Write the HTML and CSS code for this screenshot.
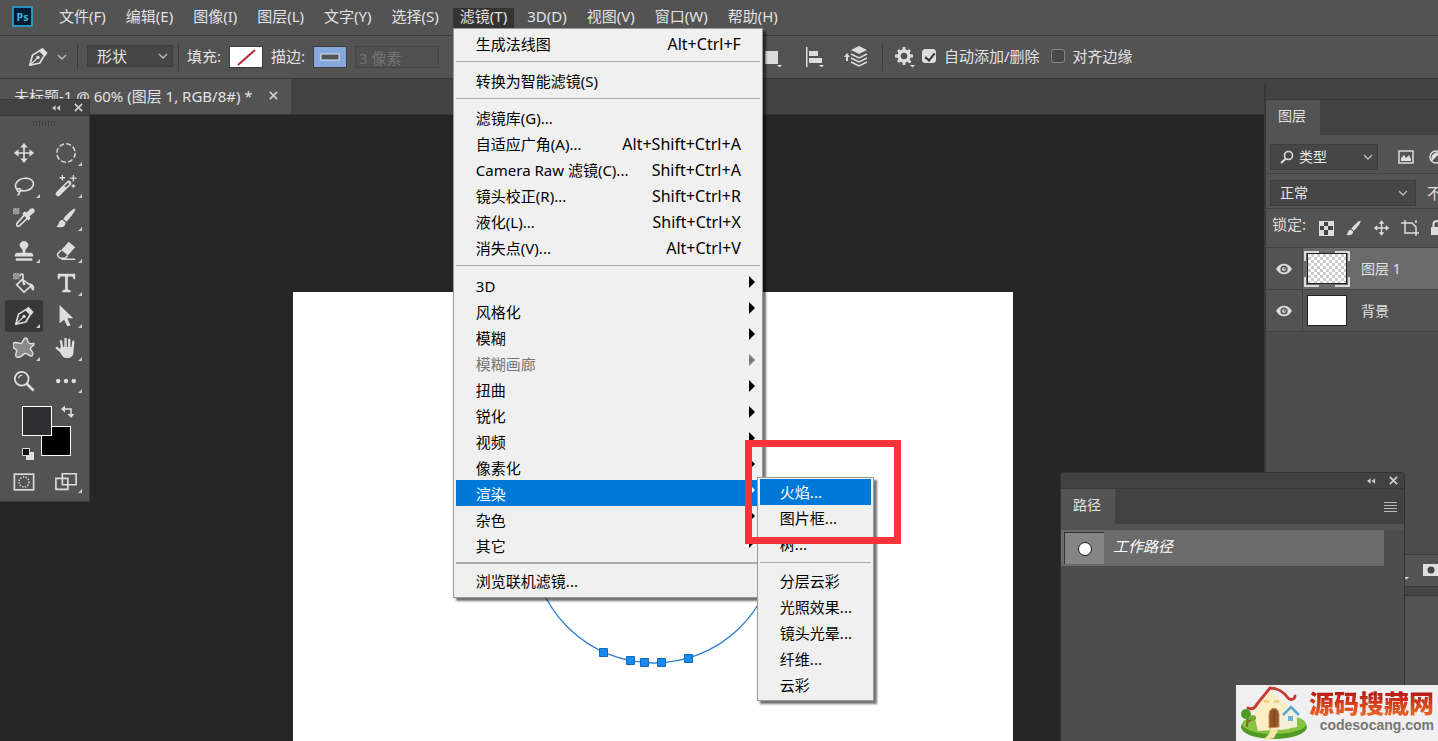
FILE: index.html
```html
<!DOCTYPE html>
<html lang="zh-CN">
<head>
<meta charset="utf-8">
<title>未标题-1 @ 60%</title>
<link rel="stylesheet" href="styles.css">
</head>
<body>
<svg class="defs" aria-hidden="true">
  <defs>
    <symbol id="pen" viewBox="0 0 24 24"><path d="M3 21l3-11 8-5 5 5-5 8.500-11 2.500z" fill="none" stroke="currentColor" stroke-width="1.800" stroke-linejoin="round"/><path d="M3.500 20.500l7.500-7" stroke="currentColor" stroke-width="1.300"/><circle cx="12" cy="12.500" r="1.800" fill="currentColor"/><path d="M13 5l4-3 5.500 5.500-3 4z" fill="currentColor"/></symbol>
    <symbol id="brush" viewBox="0 0 24 24"><path d="M22 2c1.500 1-6 11-9.500 14l-3.500-3C12 9 20 1 22 2zM8 14l3.500 3c0 6-6 5.500-10 4.500C5 20 3 15 8 14z" fill="currentColor"/></symbol>
    <symbol id="move" viewBox="0 0 24 24"><path d="M12 4v16M4 12h16" stroke="currentColor" stroke-width="1.800"/><path d="M12 1l4 5H8zM12 23l4-5H8zM1 12l5-4v8zM23 12l-5-4v8z" fill="currentColor"/></symbol>
    <symbol id="chevron" viewBox="0 0 10 6"><path d="M1 1l4 4 4-4" fill="none" stroke="#bbb" stroke-width="1.400"/></symbol>
    <symbol id="close" viewBox="0 0 10 10"><path d="M1 1l8 8M9 1l-8 8" stroke="currentColor" stroke-width="2"/></symbol>
    <symbol id="collapse" viewBox="0 0 10 6"><path d="M4 0v6L0 3zM9 0v6L5 3z" fill="currentColor"/></symbol>
    <symbol id="eye" viewBox="0 0 16 12"><path d="M0 6c4-7 12-7 16 0-4 7-12 7-16 0z" fill="currentColor"/><circle cx="8" cy="6" r="3.600" fill="#535353"/><circle cx="8" cy="6" r="2" fill="currentColor"/><circle cx="8.500" cy="5.500" r="1" fill="#535353"/></symbol>
    <pattern id="dots" width="3" height="3" patternUnits="userSpaceOnUse"><rect width="1.500" height="1.500" fill="#ddd"/><rect x="1.500" y="1.500" width="1.500" height="1.500" fill="#ddd"/></pattern>
  </defs>
</svg>
<div class="app">
  <header class="menubar">
    <svg class="logo" viewBox="0 0 20 20" role="img" aria-label="Ps"><rect x="1" y="1" width="18" height="18" fill="#001d33" stroke="#29a9e1" stroke-width="1.500"/><text x="10" y="14" text-anchor="middle">Ps</text></svg>
    <nav class="menus">
      <button class="menu-title">文件(F)</button>
      <button class="menu-title">编辑(E)</button>
      <button class="menu-title">图像(I)</button>
      <button class="menu-title">图层(L)</button>
      <button class="menu-title">文字(Y)</button>
      <button class="menu-title">选择(S)</button>
      <div class="menu-open">
        <button class="menu-title active">滤镜(T)</button>
        <ul class="menu filter-menu">
          <li><button class="item">生成法线图<kbd>Alt+Ctrl+F</kbd></button></li>
          <li class="rule"></li>
          <li><button class="item">转换为智能滤镜(S)</button></li>
          <li class="rule"></li>
          <li><button class="item">滤镜库(G)...</button></li>
          <li><button class="item">自适应广角(A)...<kbd>Alt+Shift+Ctrl+A</kbd></button></li>
          <li><button class="item">Camera Raw 滤镜(C)...<kbd>Shift+Ctrl+A</kbd></button></li>
          <li><button class="item">镜头校正(R)...<kbd>Shift+Ctrl+R</kbd></button></li>
          <li><button class="item">液化(L)...<kbd>Shift+Ctrl+X</kbd></button></li>
          <li><button class="item">消失点(V)...<kbd>Alt+Ctrl+V</kbd></button></li>
          <li class="rule"></li>
          <li><button class="item sub">3D</button></li>
          <li><button class="item sub">风格化</button></li>
          <li><button class="item sub">模糊</button></li>
          <li><button class="item sub" disabled>模糊画廊</button></li>
          <li><button class="item sub">扭曲</button></li>
          <li><button class="item sub">锐化</button></li>
          <li><button class="item sub">视频</button></li>
          <li><button class="item sub">像素化</button></li>
          <li class="submenu-host"><button class="item sub selected">渲染</button>
            <ul class="menu render-menu">
              <li><button class="item selected">火焰...</button></li>
              <li><button class="item">图片框...</button></li>
              <li><button class="item">树...</button></li>
              <li class="rule"></li>
              <li><button class="item">分层云彩</button></li>
              <li><button class="item">光照效果...</button></li>
              <li><button class="item">镜头光晕...</button></li>
              <li><button class="item">纤维...</button></li>
              <li><button class="item">云彩</button></li>
            </ul>
            <div class="highlight-frame"></div>
          </li>
          <li><button class="item sub">杂色</button></li>
          <li><button class="item sub">其它</button></li>
          <li class="rule thick"></li>
          <li><button class="item">浏览联机滤镜...</button></li>
        </ul>
      </div>
      <button class="menu-title">3D(D)</button>
      <button class="menu-title">视图(V)</button>
      <button class="menu-title">窗口(W)</button>
      <button class="menu-title">帮助(H)</button>
    </nav>
  </header>

  <section class="options">
    <div class="shape-options">
      <button class="tool-preset" aria-label="钢笔工具"><svg width="22" height="22"><use href="#pen"/></svg><svg width="10" height="6"><use href="#chevron"/></svg></button>
      <div class="select-wrap mode"><select aria-label="模式"><option>形状</option></select><svg width="10" height="6"><use href="#chevron"/></svg></div>
      <span class="divider"></span>
      <label class="swatch-label" for="fill">填充:</label>
      <button class="swatch" id="fill"><svg viewBox="0 0 32 20"><rect width="32" height="20" fill="#fff"/><path d="M8 18L25 3" stroke="#b32a35" stroke-width="2"/></svg></button>
      <label class="swatch-label" for="stroke">描边:</label>
      <button class="swatch" id="stroke"><svg viewBox="0 0 32 20"><rect width="32" height="20" fill="#87a8dc"/><rect x="7" y="7" width="18" height="6" fill="#535353" stroke="#dce6f5"/></svg></button>
      <input class="stroke-width" aria-label="描边宽度" value="3 像素" disabled>
    </div>
    <button class="icon-btn" aria-label="路径操作"><svg width="20" height="20" viewBox="0 0 20 20" fill="#ddd"><path d="M2 4h13v13H2zM14 18h5l-2.500 2.500z"/></svg></button>
    <button class="icon-btn align" aria-label="路径对齐"><svg width="20" height="20" viewBox="0 0 20 20" fill="#ddd"><path d="M1 0h1.500v20H1zM4 4h9v5H4zM4 11h13v5H4zM14 18h5l-2.500 2.500z"/></svg></button>
    <button class="icon-btn arrange" aria-label="路径排列"><svg width="26" height="22" viewBox="0 0 26 22" fill="#ddd"><path d="M4 7l3 4H5v4H3v-4H1zM16 0l8 4-8 4-8-4z"/><path d="M8 8l8 4 8-4M8 12l8 4 8-4M8 16l8 4 8-4" fill="none" stroke="#ddd" stroke-width="1.500"/></svg></button>
    <span class="divider"></span>
    <button class="icon-btn gear" aria-label="设置"><svg width="22" height="22" viewBox="0 0 22 22"><circle cx="10" cy="10" r="5" fill="none" stroke="#ddd" stroke-width="3.500"/><path d="M10 1v4M10 15v4M1 10h4M15 10h4M4 4l2.500 2.500M14 14l2.500 2.500M16 4l-2.500 2.500M6.500 13.500L4 16" stroke="#ddd" stroke-width="2.800"/><path d="M16 19h5l-2.500 2.500z" fill="#ddd"/></svg></button>
    <label class="check"><input type="checkbox" checked>自动添加/删除</label>
    <label class="check"><input type="checkbox">对齐边缘</label>
  </section>

  <div class="tabs">
    <div class="doc-tab"><span>未标题-1 @ 60% (图层 1, RGB/8#) *</span><button class="bare" aria-label="关闭"><svg width="9" height="9"><use href="#close"/></svg></button></div>
  </div>

  <main class="workspace">
    <div class="sheet">
      <svg viewBox="293 292 720 449" width="720" height="449">
        <circle cx="654" cy="541" r="122" fill="none" stroke="#2f7fd0" stroke-width="1.300"/>
        <g fill="#168bf2" stroke="#1768b5"><path d="M599.500 648.500h8v8h-8zM626.500 656.500h8v8h-8zM640.500 658.500h8v8h-8zM657.500 658.500h8v8h-8zM684.500 654.500h8v8h-8z"/></g>
      </svg>
    </div>
  </main>

  <aside class="toolbox">
    <div class="panel-bar"><button class="bare" aria-label="折叠"><svg width="9" height="6"><use href="#collapse"/></svg></button><button class="bare" aria-label="关闭"><svg width="9" height="9"><use href="#close"/></svg></button></div>
    <div class="grip"></div>
    <div class="tools">
      <button class="tool" aria-label="移动"><svg><use href="#move"/></svg></button>
      <button class="tool more" aria-label="椭圆选框"><svg viewBox="0 0 24 24"><circle cx="12" cy="12" r="10" fill="none" stroke="currentColor" stroke-width="1.600" stroke-dasharray="5.400 2.450"/></svg></button>
      <button class="tool more" aria-label="套索"><svg viewBox="0 0 24 24"><path d="M5 17C-1 10 6 4 13 3.500s11 4 8.500 9S12 18 7 16.500M5 15c3-1 5 2 2.500 3S4 16 5 15zM6 18c2 1 1 3-1 4" fill="none" stroke="currentColor" stroke-width="1.800"/></svg></button>
      <button class="tool more" aria-label="魔棒"><svg viewBox="0 0 24 24"><path d="M3.500 20.500L15 9" stroke="currentColor" stroke-width="5.500" stroke-linecap="round"/><path d="M11 13l4-4" stroke="#535353" stroke-width="2"/><path d="M8 0v6M5 3h6M20 0v7M16.500 3.500h7M20 10v4M18 12h4" stroke="currentColor" stroke-width="1.400"/></svg></button>
      <button class="tool" aria-label="吸管"><svg viewBox="0 0 24 24"><rect width="7" height="7" y="1" fill="url(#dots)"/><path d="M13 8L5 17c-2 2-1 5 2 3.500L16 12" fill="none" stroke="currentColor" stroke-width="1.800"/><path d="M10 7l3-2 2 1 4-4c3-2 6 1 4 4l-5 4 1 2-2 3z" fill="currentColor"/></svg></button>
      <button class="tool more" aria-label="画笔"><svg><use href="#brush"/></svg></button>
      <button class="tool more" aria-label="图章"><svg viewBox="0 0 24 24" fill="currentColor"><path d="M12 1a4.500 4.500 0 0 1 3 8l-1.500 2v3H19q3 0 3 3v1H2v-1q0-3 3-3h5.500v-3L9 9a4.500 4.500 0 0 1 3-8zM3 20h18v2.500H3z"/></svg></button>
      <button class="tool more" aria-label="橡皮擦"><svg viewBox="0 0 24 24"><path d="M15 2l7 6-8 9-7-6z" fill="currentColor"/><path d="M7 11l-4 4c-1 1 1 5 4 5h4l3-3M7 21h15" fill="none" stroke="currentColor" stroke-width="1.600"/></svg></button>
      <button class="tool" aria-label="油漆桶"><svg viewBox="0 0 24 24"><rect width="7" height="7" y="1" fill="url(#dots)"/><path d="M10 8l10 7-8 7-8-8zM11 12V4c0-3-4-2-3 1" fill="none" stroke="currentColor" stroke-width="1.800"/><circle cx="12" cy="13" r="1.500" fill="currentColor"/><path d="M18 12c4 1 6 4 5 7-1 2-3 1-3-1z" fill="currentColor"/></svg></button>
      <button class="tool more" aria-label="文字"><svg viewBox="0 0 24 24" fill="currentColor"><path d="M3 2h19v6h-1.500L19 5h-5v14l3 .8V22H8v-2.200l3-.8V5H6L4.500 8H3z"/></svg></button>
      <button class="tool more chosen" aria-label="钢笔"><svg><use href="#pen"/></svg></button>
      <button class="tool more" aria-label="路径选择"><svg viewBox="0 0 24 24" fill="currentColor"><path d="M5 0v20l5-4 3.500 7.500 3.500-1.500-3.500-7.500h6.500z"/></svg></button>
      <button class="tool more" aria-label="自定形状"><svg viewBox="0 0 24 24"><path d="M3 6l6 1c2-1 2-6 5-6s1 5 4 6 5-1 5 1-5 3-4 5 4 4 2 7-5-3-8-2-4 5-8 4-1-5-1-7-4-2-4-5 0-4 3-4z" fill="#8a8a8a" stroke="currentColor" stroke-width="1.600"/></svg></button>
      <button class="tool more" aria-label="抓手"><svg viewBox="0 0 24 24"><path d="M8 13L6.500 4.500M11.500 12V2M15.500 12V3M19 13l1-8M7 16l-5-4" stroke="currentColor" stroke-width="2.600" stroke-linecap="round"/><path d="M6.500 11h13.700v5c0 4-2 7-7 7-5 0-6-4-9-8z" fill="currentColor"/></svg></button>
      <button class="tool" aria-label="缩放"><svg viewBox="0 0 24 24" fill="none" stroke="currentColor"><circle cx="9.500" cy="9.500" r="7.500" stroke-width="2"/><path d="M6 9c.5-2 2-3.500 4-3" stroke-width="1.200"/><path d="M15 15l7.500 7.500" stroke-width="3"/></svg></button>
      <button class="tool more" aria-label="更多"><svg viewBox="0 0 24 24" fill="currentColor"><circle cx="3.500" cy="12" r="2.400"/><circle cx="12" cy="12" r="2.400"/><circle cx="20.500" cy="12" r="2.400"/></svg></button>
    </div>
    <svg class="colors" viewBox="0 0 89 62" role="img" aria-label="前景色和背景色"><rect x="41.500" y="23.500" width="29" height="29" fill="#000" stroke="#fff"/><rect x="22.500" y="3.500" width="29" height="29" fill="#2f2f33" stroke="#fff"/><path d="M64 6h7v7" fill="none" stroke="#ddd" stroke-width="1.500"/><path d="M61 6l4-3.500v7zM71 15l-3.500-4h7z" fill="#ddd"/><path d="M26 49h8v8h-8z" fill="#ddd"/><path d="M22.500 45.500h7v7h-7z" fill="#111" stroke="#ddd"/></svg>
    <div class="modes">
      <button class="tool" aria-label="快速蒙版"><svg viewBox="0 0 24 24" fill="none" stroke="currentColor"><rect x="1.500" y="3.500" width="21" height="17" stroke-width="1.800"/><circle cx="12" cy="12" r="5.500" stroke-width="1.500" stroke-dasharray="1.500 1.500"/></svg></button>
      <button class="tool more" aria-label="屏幕模式"><svg viewBox="0 0 24 24" fill="#535353" stroke="currentColor" stroke-width="1.800"><path d="M1 8h13v12H1zM8 3h15v12H8z"/></svg></button>
    </div>
  </aside>

  <aside class="layers">
    <div class="panel-bar"></div>
    <div class="panel-tabs"><button class="panel-tab">图层</button></div>
    <div class="row filter">
      <div class="select-wrap kind"><svg width="14" height="14" viewBox="0 0 14 14"><circle cx="8.500" cy="5.500" r="4" fill="none" stroke="#ddd" stroke-width="1.600"/><path d="M6 8.500L1 13" stroke="#ddd" stroke-width="2"/></svg><select aria-label="过滤"><option>类型</option></select><svg width="10" height="6"><use href="#chevron"/></svg></div>
      <svg width="16" height="14" viewBox="0 0 16 14"><path d="M1 1h14v12H1z" fill="none" stroke="#ddd" stroke-width="1.500"/><path d="M3 11V8l3-3 2 3 3-3 2 4v2z" fill="#ddd"/></svg>
      <svg width="14" height="14" viewBox="0 0 14 14"><circle cx="7" cy="7" r="6" fill="none" stroke="#ddd" stroke-width="1.500"/><path d="M3 11a6 6 0 0 1 8-8z" fill="#ddd"/></svg>
    </div>
    <div class="row blend">
      <div class="select-wrap"><select aria-label="混合模式"><option>正常</option></select><svg width="10" height="6"><use href="#chevron"/></svg></div>
      <span>不透明度:</span>
    </div>
    <div class="row lock"><span>锁定:</span>
      <svg width="15" height="15" viewBox="0 0 15 15"><path d="M0 0h15v15H0z" fill="#ddd"/><path d="M5 1h4v4H5zM1 5h4v4H1zM9 5h5v4H9zM5 9h4v5H5z" fill="#444"/></svg>
      <svg width="17" height="18"><use href="#brush"/></svg>
      <svg width="17" height="18"><use href="#move"/></svg>
      <svg width="18" height="16" viewBox="0 0 18 16" fill="none" stroke="#ddd" stroke-width="1.500"><path d="M4 0v13h14M0 3h11l4 4v9M15 0v3"/></svg>
      <svg width="14" height="16" viewBox="0 0 14 16"><path d="M1 7h12v8H1z" fill="#ddd"/><path d="M3.500 7V4c0-4 7-4 7 0v3" fill="none" stroke="#ddd" stroke-width="2"/></svg>
    </div>
    <div class="layer current"><button class="eye" aria-label="可见"><svg width="16" height="12"><use href="#eye"/></svg></button><div class="thumb framed"><div class="checker"></div><svg viewBox="0 0 46 36"><path d="M15 1H1v9M31 1h14v9M1 26v9h14M45 26v9H31" fill="none" stroke="#fff" stroke-width="1.500"/></svg></div><span>图层 1</span></div>
    <div class="layer"><button class="eye" aria-label="可见"><svg width="16" height="12"><use href="#eye"/></svg></button><div class="thumb"><div class="white"></div></div><span>背景</span></div>
    <div class="layer-space"></div>
    <div class="layer-actions"><svg width="38" height="16" viewBox="0 0 38 16"><path d="M20 0h18v12H20z" fill="#ddd"/><circle cx="28" cy="6" r="3.500" fill="#444"/><path d="M1 13h5l-2.500 2.500z" fill="#ddd"/></svg></div>
    <div class="dock-gap"></div>
    <div class="dock-rest"></div>
  </aside>

  <aside class="paths">
    <div class="panel-bar"><button class="bare" aria-label="折叠"><svg width="9" height="6"><use href="#collapse"/></svg></button><button class="bare" aria-label="关闭"><svg width="9" height="9"><use href="#close"/></svg></button></div>
    <div class="panel-tabs"><button class="panel-tab">路径</button><button class="bare burger" aria-label="面板菜单"><svg width="13" height="10" viewBox="0 0 13 10"><path d="M0 .5h13M0 3.500h13M0 6.500h13M0 9.500h13" stroke="#bbb"/></svg></button></div>
    <div class="path-list"><div class="path-row"><div class="path-thumb"><svg width="16" height="16" viewBox="0 0 16 16"><circle cx="8" cy="8" r="6.500" fill="#fff" stroke="#111"/></svg></div><span>工作路径</span></div></div>
  </aside>

  <div class="watermark">
    <svg width="72" height="56" viewBox="0 0 72 56">
      <ellipse cx="38" cy="42" rx="33" ry="12" fill="#4f9a25"/><ellipse cx="38" cy="39" rx="32" ry="10" fill="#86c440"/>
      <path d="M16 22L34 6l18 14 1 24-31 2z" fill="#fbeec6"/><path d="M42 30l10-8 9 8v12l-17 3z" fill="#f6efd8"/>
      <path d="M12 23c4 2 7 0 9-4L34 3c7 0 14 4 18 10 3 3 7 1 7-2" fill="none" stroke="#c53b32" stroke-width="2.800" stroke-linecap="round"/>
      <path d="M47 30l8-8 8 8" fill="none" stroke="#58a8d0" stroke-width="2.500"/><path d="M52 31h5v5h-5z" fill="#67b6de"/>
      <path d="M33 43V30c0-9 10-9 10 0v12z" fill="#93572b" stroke="#d0924f"/><path d="M38 25v17" stroke="#6c3c1c"/>
      <path d="M34 44l8 1-4 8-10 2c2-5 7-5 6-11z" fill="#f6e4a8"/>
      <path d="M11 42l1-14M12 37l5-4" stroke="#8b6334" stroke-width="2"/><circle cx="10" cy="29" r="5" fill="#4f9a25"/><circle cx="17" cy="33" r="3" fill="#6bb033"/>
      <path d="M28 15h5v3h-5zM38 15h5v3h-5z" fill="#efcf8a"/>
    </svg>
    <div class="brand"><strong>源码搜藏网</strong><span>codesocang.com</span></div>
  </div>
</div>
</body>
</html>
```
FILE: styles.css
```css
* { box-sizing: border-box; }
body { margin: 0; color: #e2e2e2; background: #262626; font: 15px/20px "Noto Sans", "Noto Sans CJK SC", sans-serif; }
button, input, select { font: inherit; color: inherit; }
button { padding: 0; border: 0; background: none; }
svg { display: block; flex: none; }
.defs { position: absolute; width: 0; height: 0; }
.app { position: relative; display: flex; flex-direction: column; min-height: 100vh; overflow: hidden; }

.menubar { display: flex; align-items: center; height: 36px; padding: 0 12px; background: #535353; border-bottom: 1px solid #3c3c3c; }
.logo { width: 21px; height: 21px; margin-bottom: 3px; }
.logo text { font: bold 10px "Open Sans", sans-serif; fill: #38b6ea; }
.menus { display: flex; gap: 6px; margin-left: 19px; }
.menu-title { height: 20px; padding: 0 7px 3px; line-height: 17px; white-space: nowrap; }
.menu-title.active { background: #333; display: block; }
.menu-open { position: relative; margin-left: 1px; }

.menu { position: absolute; z-index: 5; margin: 0; padding: 2px 2px 3px; list-style: none; color: #000; background: #f0f0f0; border: 1px solid #999; box-shadow: 3px 3px 2px rgba(0, 0, 0, .55); }
.filter-menu { left: 0; top: 20px; width: 310px; }
.item { display: flex; justify-content: space-between; align-items: center; position: relative; width: 100%; height: 26px; padding: 0 19px 0 20px; white-space: nowrap; text-align: left; }
.item kbd { font-family: inherit; font-size: 16px; }
.item:disabled { color: #777; }
.item.selected { color: #fff; background: #0078d7; }
.sub { padding-top: 2px; }
.sub::after { content: ""; position: absolute; right: 5px; top: 4px; border: 6px solid transparent; border-left-color: currentColor; border-right-width: 0; }
.rule { height: 1px; margin: 4px 0 6px; background: #aaa; }
.rule.thick { height: 2px; margin: 4px 0; }
.submenu-host { position: relative; }
.render-menu { left: 301px; top: -3px; width: 117px; padding: 1px 2px 2px; }
.render-menu .rule { margin: 5px 0; }
.highlight-frame { position: absolute; z-index: 6; left: 289px; top: -40px; width: 156px; height: 104px; border: 7px solid #f8333c; pointer-events: none; }

.options { display: flex; align-items: center; height: 43px; background: #535353; border-bottom: 1px solid #383838; }
.shape-options { display: flex; align-items: center; width: 763px; height: 43px; padding-left: 27px; }
.tool-preset { display: flex; align-items: center; gap: 8px; padding-right: 10px; margin-right: 9px; height: 26px; border-right: 1px solid #3d3d3d; }
.select-wrap { display: flex; flex: none; align-items: center; padding: 0 7px; background: #464646; border: 1px solid #3d3d3d; color: #e8e8e8; }
.select-wrap select { flex: 1; min-width: 0; appearance: none; border: 0; padding: 0; background: none; outline: 0; }
.mode { width: 86px; height: 22px; margin-bottom: 2px; padding: 0 4px 0 9px; }
.divider { width: 1px; height: 28px; margin: 0 8px 0 5px; background: #3d3d3d; }
.swatch-label { margin: 0 8px 3px 0; }
.swatch { width: 34px; height: 22px; margin-right: 8px; border: 1px solid #3d3d3d; }
.stroke-width { width: 84px; height: 22px; padding: 0 3px; border: 1px solid #454545; background: #505050; color: #747474; }
.icon-btn { margin-right: 22px; }
.align { margin-right: 18px; }
.arrange { margin-right: 8px; }
.gear { margin: 0 6px 0 3px; }
.check { display: flex; align-items: center; gap: 8px; margin: 0 11px 3px 0; }
.check input { appearance: none; width: 14px; height: 14px; margin: 0; border: 1px solid #888; border-radius: 3px; background: #484848; }
.check input:checked { border-color: #ddd; background: #ddd; position: relative; }
.check input:checked::after { content: ""; position: absolute; left: 4px; top: 1px; width: 4px; height: 8px; border: solid #333; border-width: 0 2px 2px 0; transform: rotate(40deg); }

.tabs { display: flex; height: 36px; background: #424242; border-bottom: 1px solid #333; }
.doc-tab { display: flex; align-items: center; gap: 16px; padding: 0 13px 2px 14px; background: #535353; }
.bare svg { color: #ccc; }
.workspace { display: flex; flex: 1; padding: 177px 29.55% 0 293px; background: #262626; }
.sheet { flex: 1; min-height: 449px; background: #fff; overflow: hidden; }

.panel-bar { display: flex; align-items: center; justify-content: flex-end; gap: 13px; height: 16px; padding: 0 6px; background: #424242; border-bottom: 1px solid #383838; }
.panel-tabs { display: flex; justify-content: space-between; height: 35px; background: #424242; }
.panel-tab { padding: 0 14px 3px 12px; font-size: 14px; background: #535353; }
.toolbox { position: absolute; left: 0; top: 99px; width: 90px; padding-bottom: 4px; background: #535353; border: solid #3a3a3a; border-width: 1px 1px 1px 0; }
.grip { width: 24px; height: 5px; margin: 5px auto 0 33px; background: repeating-linear-gradient(90deg, #3f3f3f 0 1px, #535353 1px 3px); }
.tools, .modes { display: grid; grid-template-columns: 38px 38px; column-gap: 4px; padding-left: 5px; color: #ddd; }
.tools { height: 260px; margin-top: 11px; grid-auto-rows: 1fr; }
.modes { margin-top: 2px; }
.tool { position: relative; display: grid; place-items: center; min-height: 30px; border-radius: 3px; }
.tool svg { width: 22px; height: 22px; }
.more::after { content: ""; position: absolute; right: 3px; bottom: 4px; border: 2px solid transparent; border-right-color: #ccc; border-bottom-color: #ccc; }
.chosen { background: #383838; }
.colors { width: 89px; height: 62px; margin-top: 6px; }

.layers { position: absolute; right: 0; top: 83px; bottom: 0; width: 174px; display: flex; flex-direction: column; overflow: hidden; background: #535353; border-left: 2px solid #383838; font-size: 14px; white-space: nowrap; }
.layers .panel-bar { height: 17px; }
.row { display: flex; align-items: center; color: #ddd; border-bottom: 1px solid #424242; }
.filter { height: 39px; gap: 15px; padding: 6px 0 0 4px; }
.filter .select-wrap { margin-right: 5px; }
.kind { width: 108px; height: 26px; gap: 5px; padding: 0 4px 0 9px; }
.blend { height: 35px; gap: 11px; padding: 4px 0 0 4px; font-size: 15px; }
.blend .select-wrap { width: 146px; height: 26px; padding-left: 9px; font-size: 14px; }
.lock { height: 39px; gap: 11px; padding-left: 6px; font-size: 15px; }
.lock span { margin: 0 2px 8px 0; }
.layer { display: flex; align-items: stretch; height: 42px; border-bottom: 1px solid #424242; }
.layer > span { align-self: center; margin-left: 10px; }
.layer.current { background: #6b6b6b; }
.eye { display: grid; place-items: center; width: 37px; background: #535353; border-right: 1px solid #424242; color: #ddd; }
.thumb { position: relative; display: grid; place-items: center; width: 48px; }
.thumb svg { position: absolute; width: 46px; height: 36px; }
.checker, .white { width: 40px; height: 31px; border: 1px solid #222; background: #fff; }
.checker { background: repeating-conic-gradient(#ccc 0 25%, #fff 0 50%) 0 0 / 6px 6px; }
.layer-space { height: 223px; background: #4d4d4d; border-bottom: 1px solid #3d3d3d; }
.layer-actions { height: 31px; padding: 9px 0 0 137px; }
.dock-gap { height: 10px; background: #454545; border: solid #393939; border-width: 1px 0; }
.dock-rest { flex: 1; }

.paths { position: absolute; right: 33px; top: 472px; bottom: 0; width: 345px; display: flex; flex-direction: column; background: #535353; border: 1px solid #333; border-bottom: 0; border-radius: 4px 4px 0 0; overflow: hidden; }
.burger { margin-right: 7px; }
.path-list { flex: 1; margin-top: 6px; background: #4d4d4d; }
.path-row { display: flex; align-items: center; gap: 9px; height: 36px; margin-right: 20px; padding-left: 3px; background: #6b6b6b; font-style: italic; color: #fff; }
.path-row span { margin-bottom: 5px; }
.path-thumb { display: grid; place-items: center; width: 40px; height: 32px; background: #858585; border: solid #333; border-width: 1px 0 0 1px; }

.watermark { position: absolute; z-index: 7; right: 0; bottom: 0; display: flex; height: 56px; background: #f0f0f0; }
.brand { display: flex; flex-direction: column; align-items: flex-end; padding: 2px 4px 0 1px; }
.brand strong { font: 900 25px/30px "Noto Sans CJK SC", sans-serif; color: transparent; background: linear-gradient(#b81c16 20%, #f06a28); background-clip: text; -webkit-background-clip: text; }
.brand span { font: bold 14px/16px "Liberation Sans", sans-serif; color: #777; }
```
